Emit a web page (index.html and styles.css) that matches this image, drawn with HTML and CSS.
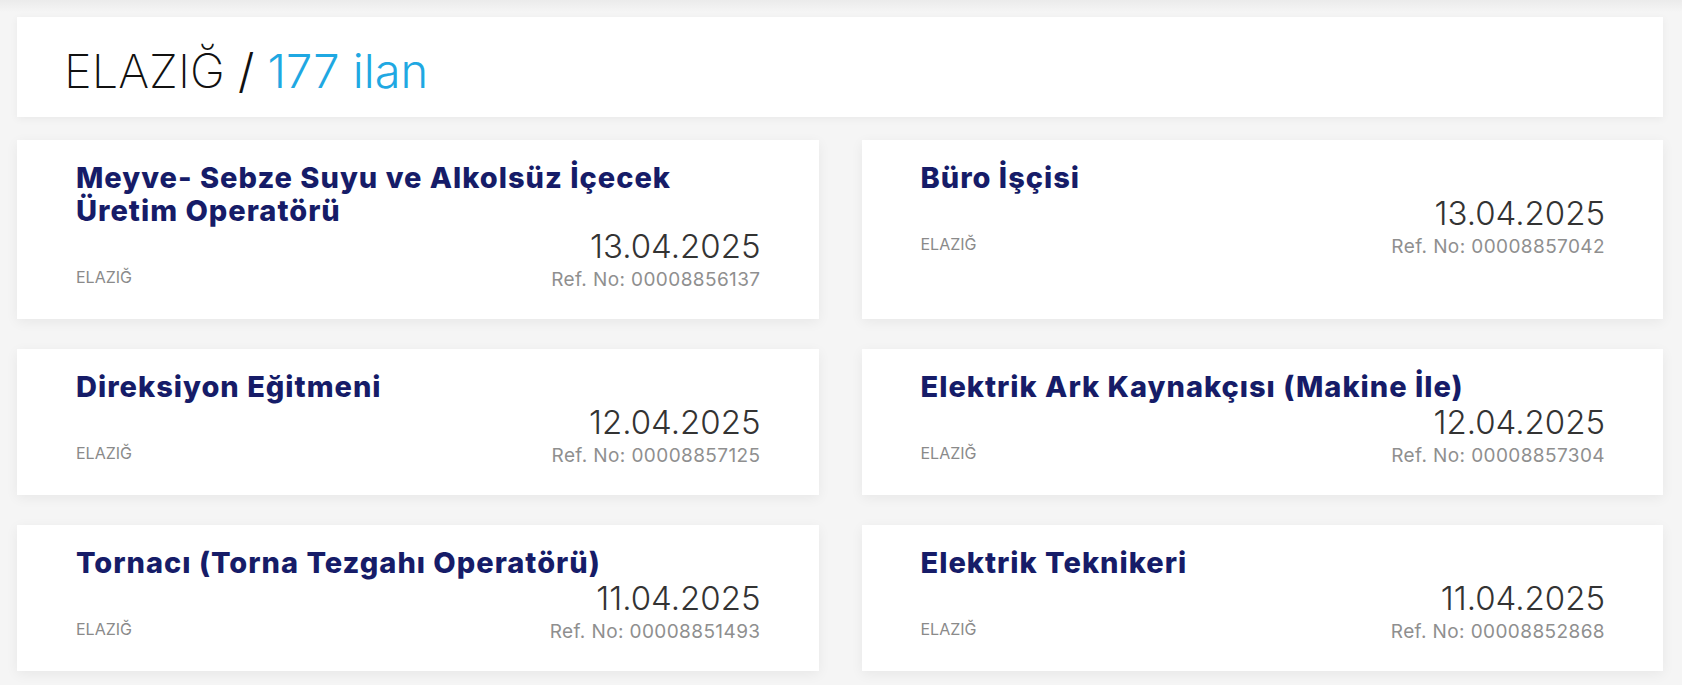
FILE: index.html
```html
<!DOCTYPE html>
<html lang="tr">
<head>
  <meta charset="UTF-8">
  <meta name="viewport" content="width=device-width, initial-scale=1.0">
  <title>Elazığ İş İlanları</title>
  <link rel="stylesheet" href="styles.css">
</head>
<body>
  <div class="page">
    <div class="city-header">
      <h1><span class="city">ELAZIĞ</span> / <span class="count">177 ilan</span></h1>
    </div>

    <div class="job-list">
      <div class="job-card">
        <h3 class="job-title">Meyve- Sebze Suyu ve Alkolsüz İçecek Üretim Operatörü</h3>
        <div class="job-meta">
          <span class="job-location">ELAZIĞ</span>
          <div class="job-info">
            <div class="job-date">13.04.2025</div>
            <div class="job-ref">Ref. No: 00008856137</div>
          </div>
        </div>
      </div>

      <div class="job-card">
        <h3 class="job-title">Büro İşçisi</h3>
        <div class="job-meta">
          <span class="job-location">ELAZIĞ</span>
          <div class="job-info">
            <div class="job-date">13.04.2025</div>
            <div class="job-ref">Ref. No: 00008857042</div>
          </div>
        </div>
      </div>

      <div class="job-card">
        <h3 class="job-title">Direksiyon Eğitmeni</h3>
        <div class="job-meta">
          <span class="job-location">ELAZIĞ</span>
          <div class="job-info">
            <div class="job-date">12.04.2025</div>
            <div class="job-ref">Ref. No: 00008857125</div>
          </div>
        </div>
      </div>

      <div class="job-card">
        <h3 class="job-title">Elektrik Ark Kaynakçısı (Makine İle)</h3>
        <div class="job-meta">
          <span class="job-location">ELAZIĞ</span>
          <div class="job-info">
            <div class="job-date">12.04.2025</div>
            <div class="job-ref">Ref. No: 00008857304</div>
          </div>
        </div>
      </div>

      <div class="job-card">
        <h3 class="job-title">Tornacı (Torna Tezgahı Operatörü)</h3>
        <div class="job-meta">
          <span class="job-location">ELAZIĞ</span>
          <div class="job-info">
            <div class="job-date">11.04.2025</div>
            <div class="job-ref">Ref. No: 00008851493</div>
          </div>
        </div>
      </div>

      <div class="job-card">
        <h3 class="job-title">Elektrik Teknikeri</h3>
        <div class="job-meta">
          <span class="job-location">ELAZIĞ</span>
          <div class="job-info">
            <div class="job-date">11.04.2025</div>
            <div class="job-ref">Ref. No: 00008852868</div>
          </div>
        </div>
      </div>
    </div>
  </div>
</body>
</html>
```

FILE: styles.css
```css
* {
  box-sizing: border-box;
}

body {
  margin: 0;
  font-family: Inter, "Noto Sans", sans-serif;
  background: linear-gradient(#ebebeb, #f5f5f5 12px) no-repeat, #f5f5f5;
}

.page {
  padding: 17px 19px 40px 17px;
}

/* header */
.city-header {
  height: 100px;
  padding: 7px 0 0 47px;
  background-color: #fff;
  box-shadow: 0 2px 8px rgba(0, 0, 0, .05);
}

.city-header h1 {
  margin: 0;
  font-size: 47px;
  font-weight: 300;
  line-height: 93px;
  color: #111;
}

.city-header .city {
  font-weight: 250;
}

.city-header .count {
  color: #1fa8e2;
}

/* job cards */
.job-list {
  display: grid;
  grid-template-columns: 1fr 1fr;
  gap: 30px 43px;
  margin-top: 23px;
}

.job-card {
  padding: 21px 58px 27px 59px;
  background-color: #fff;
  box-shadow: 0 3px 12px rgba(0, 0, 0, .06);
}

.job-title {
  margin: 0;
  font-size: 29px;
  font-weight: 800;
  line-height: 33px;
  color: #161c68;
  letter-spacing: 1px;
}

.job-meta {
  display: flex;
  justify-content: space-between;
  align-items: flex-end;
  margin-top: 3px;
}

.job-location {
  padding-bottom: 3px;
  font-size: 16px;
  line-height: 24px;
  color: #8a8a8a;
}

.job-info {
  text-align: right;
}

.job-date {
  font-size: 33px;
  font-weight: 300;
  line-height: 32px;
  color: #333;
}

.job-ref {
  margin-top: 6px;
  font-size: 19px;
  line-height: 24px;
  color: #8f8f8f;
  letter-spacing: 0.4px;
}
```
